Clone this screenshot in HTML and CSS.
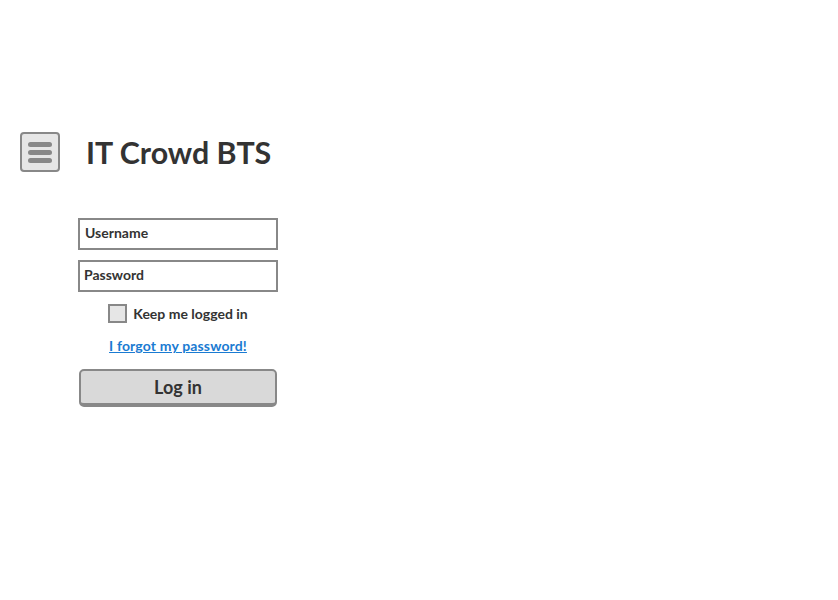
FILE: index.html
```html
<!DOCTYPE html>
<html>
<head>
<meta charset="utf-8">
<link rel="stylesheet" href="styles.css">
</head>
<body>
<div class="page">
  <header class="header">
    <div class="menu-btn">
      <span class="bar"></span>
      <span class="bar"></span>
      <span class="bar"></span>
    </div>
    <h1 class="title">IT Crowd BTS</h1>
  </header>
  <form class="login">
    <div class="field"><span>Username</span></div>
    <div class="field field-pw"><span>Password</span></div>
    <label class="remember"><span class="check"></span><span>Keep me logged in</span></label>
    <a class="forgot" href="#">I forgot my password!</a>
    <div class="btn">Log in</div>
  </form>
</div>
</body>
</html>
```

FILE: styles.css
```css
html, body {
  margin: 0;
  padding: 0;
  background: #fff;
}
body {
  font-family: Lato, "Open Sans", sans-serif;
  color: #333;
}
.page {
  padding: 132px 0 0 20px;
}
.header {
  display: flex;
  align-items: center;
  gap: 26px;
  height: 40px;
}
.menu-btn {
  box-sizing: border-box;
  width: 40px;
  height: 40px;
  border: 2px solid #888;
  border-radius: 4px;
  background: #e6e6e6;
  display: flex;
  flex-direction: column;
  align-items: center;
  justify-content: center;
  gap: 3px;
}
.bar {
  width: 24px;
  height: 5px;
  border-radius: 3px;
  background: #888;
}
.title {
  margin: 0;
  font-size: 30.4px;
  line-height: 40px;
  font-weight: 700;
  color: #333;
}
.login {
  margin: 46px 0 0 58px;
  width: 200px;
  display: flex;
  flex-direction: column;
  align-items: stretch;
}
.field {
  box-sizing: border-box;
  height: 32px;
  border: 2px solid #888;
  padding: 0 5px 3px 5px;
  display: flex;
  align-items: center;
  font-size: 14px;
  font-weight: 700;
  color: #333;
}
.field-pw {
  margin-top: 10px;
  padding-left: 4px;
}
.remember {
  margin-top: 12px;
  display: flex;
  align-items: center;
  justify-content: center;
  gap: 6px;
  font-size: 14px;
  font-weight: 700;
  color: #333;
}
.check {
  box-sizing: border-box;
  width: 19px;
  height: 19px;
  border: 2px solid #888;
  background: #e6e6e6;
}
.forgot {
  margin-top: 14px;
  text-align: center;
  font-size: 14px;
  letter-spacing: 0.15px;
  font-weight: 700;
  color: #1a7bd2;
  text-decoration: underline;
}
.btn {
  box-sizing: border-box;
  margin: 15px 1px 0 1px;
  height: 38px;
  padding-bottom: 1px;
  border: 2px solid #888;
  border-bottom-width: 4px;
  border-radius: 5px;
  background: #d9d9d9;
  display: flex;
  align-items: center;
  justify-content: center;
  font-size: 18px;
  font-weight: 700;
  color: #333;
}
```
